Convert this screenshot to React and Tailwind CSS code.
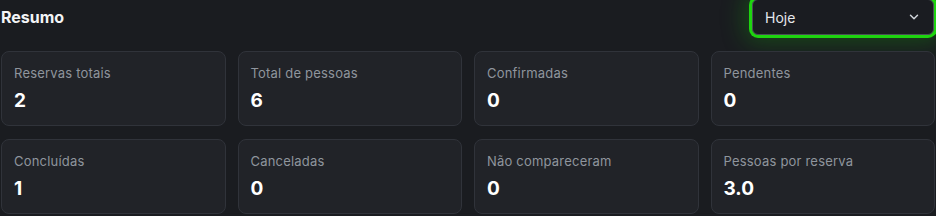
import { ChevronDown } from 'lucide-react'

const stats = [
  { label: 'Reservas totais', value: '2' },
  { label: 'Total de pessoas', value: '6' },
  { label: 'Confirmadas', value: '0' },
  { label: 'Pendentes', value: '0' },
  { label: 'Concluídas', value: '1' },
  { label: 'Canceladas', value: '0' },
  { label: 'Não compareceram', value: '0' },
  { label: 'Pessoas por reserva', value: '3.0' },
]

const App = () => {
  return (
    <div
      className="w-[936px] h-[216px] overflow-hidden bg-[#1a1c20] text-white"
      style={{ fontFamily: 'Inter, "Noto Sans", sans-serif' }}
    >
      <div className="flex items-center justify-between h-9 -mt-px">
        <h2 className="pl-px text-[16px] font-bold text-[#f3f4f6]">Resumo</h2>
        <div className="mr-[2px] w-[182px] h-9 flex items-center justify-between pl-3 pr-3 rounded-md bg-[#1a1c21] border border-[#4a4e56] ring-[3px] ring-[#1ed40f] shadow-[0_0_22px_8px_rgba(20,150,15,0.35)]">
          <span className="text-[14px] text-[#e5e7eb]">Hoje</span>
          <ChevronDown className="w-[14px] h-[14px] text-[#d1d5db]" strokeWidth={2.5} />
        </div>
      </div>

      <div className="mt-[16px] ml-px w-[934px] grid grid-cols-4 gap-x-3 gap-y-[13px]">
        {stats.map((s) => (
          <div
            key={s.label}
            className="h-[75px] rounded-lg border border-[#30333a] bg-[#212328] px-3 pt-[11px]"
          >
            <p className="text-[13px] leading-5 tracking-[0.2px] text-[#8f959d]">{s.label}</p>
            <p className="mt-[4px] text-[19px] leading-7 font-bold text-white">{s.value}</p>
          </div>
        ))}
      </div>
    </div>
  )
}

export default App
